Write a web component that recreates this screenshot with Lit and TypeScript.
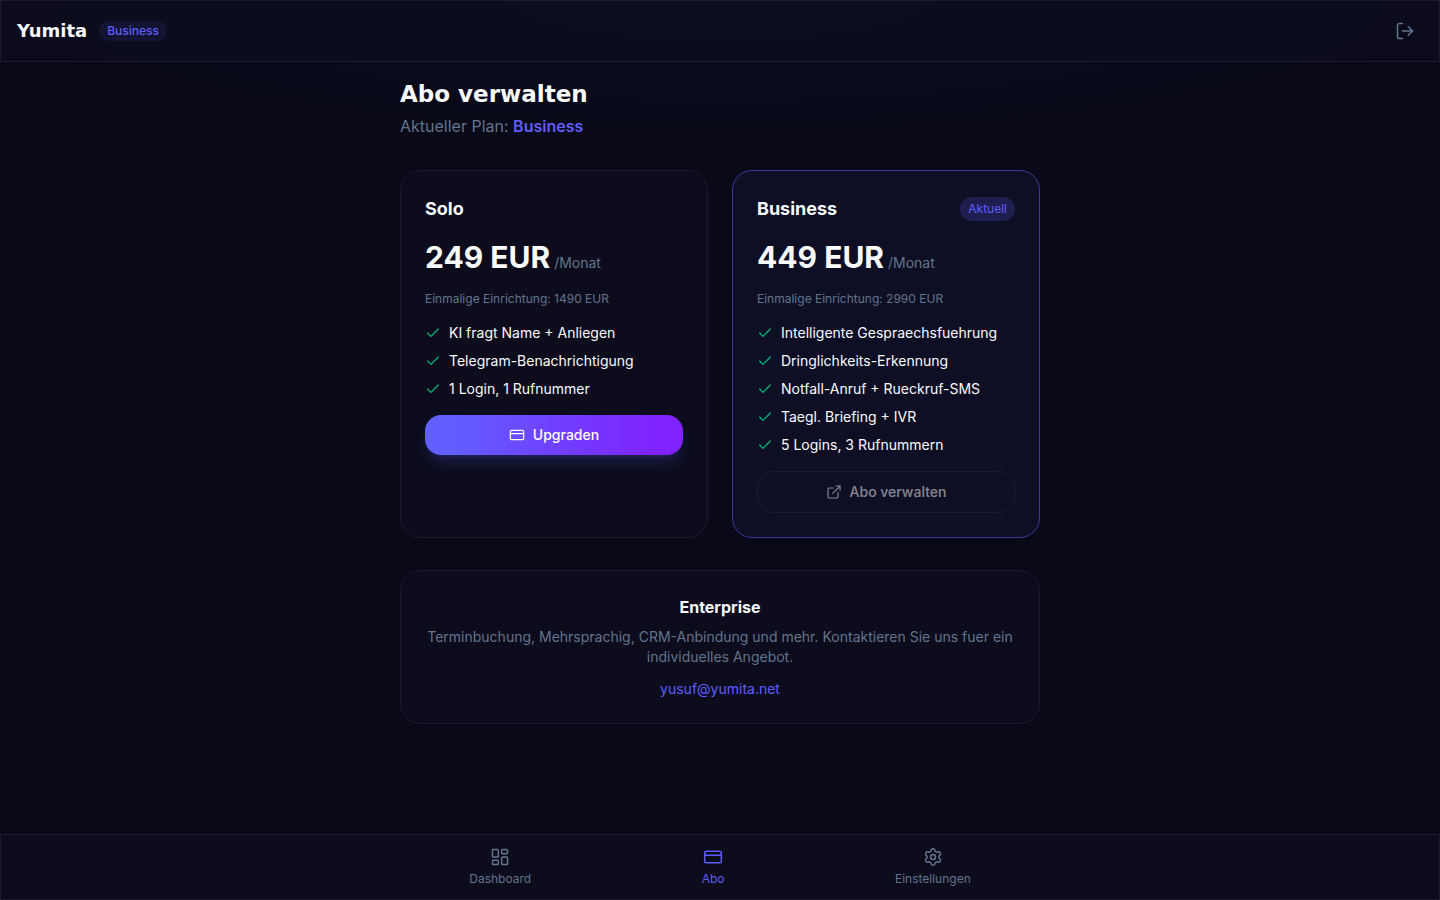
import { LitElement, html, css, svg } from "lit";
import { customElement, property } from "lit/decorators.js";
import { classMap } from "lit/directives/class-map.js";

const ICONS = {
  logout: svg`<path d="m16 17 5-5-5-5"/><path d="M21 12H9"/><path d="M9 21H5a2 2 0 0 1-2-2V5a2 2 0 0 1 2-2h4"/>`,
  check: svg`<path d="M20 6 9 17l-5-5"/>`,
  card: svg`<rect width="20" height="14" x="2" y="5" rx="2"/><path d="M2 10h20"/>`,
  external: svg`<path d="M15 3h6v6"/><path d="M10 14 21 3"/><path d="M18 13v6a2 2 0 0 1-2 2H5a2 2 0 0 1-2-2V8a2 2 0 0 1 2-2h6"/>`,
  dashboard: svg`<rect width="7" height="9" x="3" y="3" rx="1"/><rect width="7" height="5" x="14" y="3" rx="1"/><rect width="7" height="9" x="14" y="12" rx="1"/><rect width="7" height="5" x="3" y="16" rx="1"/>`,
  settings: svg`<path d="M9.671 4.136a2.34 2.34 0 0 1 4.659 0 2.34 2.34 0 0 0 3.319 1.915 2.34 2.34 0 0 1 2.33 4.033 2.34 2.34 0 0 0 0 3.831 2.34 2.34 0 0 1-2.33 4.033 2.34 2.34 0 0 0-3.319 1.915 2.34 2.34 0 0 1-4.659 0 2.34 2.34 0 0 0-3.32-1.915 2.34 2.34 0 0 1-2.33-4.033 2.34 2.34 0 0 0 0-3.831A2.34 2.34 0 0 1 6.35 6.051a2.34 2.34 0 0 0 3.319-1.915"/><circle cx="12" cy="12" r="3"/>`,
};
type IconName = keyof typeof ICONS;

const icon = (name: IconName, size = 20) => html`
  <svg class="icon" width=${size} height=${size} viewBox="0 0 24 24" fill="none"
    stroke="currentColor" stroke-width="1.8" stroke-linecap="round"
    stroke-linejoin="round" aria-hidden="true">${ICONS[name]}</svg>`;

interface Plan {
  name: string;
  price: number;
  setup: number;
  features: string[];
}

const PLANS: Plan[] = [
  {
    name: "Solo",
    price: 249,
    setup: 1490,
    features: ["KI fragt Name + Anliegen", "Telegram-Benachrichtigung", "1 Login, 1 Rufnummer"],
  },
  {
    name: "Business",
    price: 449,
    setup: 2990,
    features: [
      "Intelligente Gespraechsfuehrung",
      "Dringlichkeits-Erkennung",
      "Notfall-Anruf + Rueckruf-SMS",
      "Taegl. Briefing + IVR",
      "5 Logins, 3 Rufnummern",
    ],
  },
];

const NAV: { label: string; icon: IconName; active?: boolean }[] = [
  { label: "Dashboard", icon: "dashboard" },
  { label: "Abo", icon: "card", active: true },
  { label: "Einstellungen", icon: "settings" },
];

const base = css`
  *, *::before, *::after { box-sizing: border-box; }
  h1, h2, p, ul { margin: 0; padding: 0; }
  ul { list-style: none; }
  a { color: inherit; text-decoration: none; }
  button { font: inherit; color: inherit; background: none; border: 0; padding: 0; cursor: pointer; }
  .icon { display: block; flex: none; }
`;

@customElement("plan-card")
export class PlanCard extends LitElement {
  @property({ attribute: false }) plan!: Plan;
  @property({ type: Boolean }) current = false;

  static styles = [
    base,
    css`
      :host { display: grid; }
      .card {
        padding: 24px;
        border: 1px solid var(--line);
        border-radius: 20px;
        background: var(--surface);
      }
      .card.current { border-color: #3b3a9c; background: #0e0f24; }
      .head { display: flex; align-items: center; justify-content: space-between; margin-bottom: 16px; }
      .name { font-size: 18px; line-height: 28px; font-weight: 700; }
      .badge {
        padding: 4px 8px;
        border-radius: 12px;
        background: rgba(97, 95, 255, 0.2);
        color: var(--accent);
        font-size: 12px;
        line-height: 16px;
      }
      .price { font-size: 30px; line-height: 36px; font-weight: 700; margin-bottom: 16px; }
      .per { font-size: 14px; line-height: 20px; font-weight: 400; color: var(--muted); }
      .setup { font-size: 12px; line-height: 16px; color: var(--muted); margin-bottom: 16px; }
      .features { display: grid; gap: 8px; margin-bottom: 16px; font-size: 14px; line-height: 20px; }
      .feature { display: flex; align-items: center; gap: 8px; }
      .feature .icon { color: #00bc7d; }
      .action {
        display: flex;
        align-items: center;
        justify-content: center;
        gap: 8px;
        width: 100%;
        padding: 10px 16px;
        border-radius: 16px;
        font-size: 14px;
        line-height: 20px;
        font-weight: 500;
      }
      .primary {
        background: linear-gradient(90deg, #615fff 10%, #7f22fe 90%);
        box-shadow: 0 10px 15px -3px rgba(97, 95, 255, 0.2), 0 4px 6px -4px rgba(97, 95, 255, 0.2);
        color: #fff;
      }
      .ghost { border: 1px solid #28283c; opacity: 0.5; cursor: default; }
    `,
  ];

  render() {
    const { name, price, setup, features } = this.plan;
    return html`
      <article class=${classMap({ card: true, current: this.current })}>
        <div class="head">
          <h2 class="name">${name}</h2>
          ${this.current ? html`<span class="badge">Aktuell</span>` : ""}
        </div>
        <p class="price">${price} EUR<span class="per"> /Monat</span></p>
        <p class="setup">Einmalige Einrichtung: ${setup} EUR</p>
        <ul class="features">
          ${features.map((f) => html`<li class="feature">${icon("check", 16)}<span>${f}</span></li>`)}
        </ul>
        ${this.current
          ? html`<button class="action ghost" disabled>${icon("external", 16)}Abo verwalten</button>`
          : html`<button class="action primary">${icon("card", 16)}Upgraden</button>`}
      </article>
    `;
  }
}

@customElement("app-root")
export class AppRoot extends LitElement {
  static styles = [
    base,
    css`
      :host {
        --accent: #5f5dfb;
        --muted: #62748e;
        --line: #1b1b2c;
        --surface: #0c0c1d;
        display: flex;
        flex-direction: column;
        min-height: 100vh;
        background:
          radial-gradient(ellipse 50% 140px at 50% 0, rgba(20, 60, 130, 0.1), transparent),
          #090917;
        color: #f8fafc;
        font-family: Inter, "Liberation Sans", sans-serif;
        font-size: 16px;
        line-height: 24px;
      }
      .header {
        display: flex;
        align-items: center;
        justify-content: space-between;
        padding: 12px 16px;
        border: 1px solid var(--line);
        background: rgba(14, 14, 32, 0.6);
      }
      .brand { display: flex; align-items: center; gap: 12px; }
      .logo { font: 700 18px/28px "DejaVu Sans", sans-serif; }
      .tier {
        padding: 2px 8px;
        border-radius: 10px;
        background: rgba(97, 95, 255, 0.1);
        color: var(--accent);
        font-size: 12px;
        line-height: 16px;
        font-weight: 500;
      }
      .logout { padding: 8px; color: var(--muted); }
      .main { flex: 1; width: 100%; max-width: 672px; margin: 0 auto; padding: 16px; }
      .title { font: 700 23px/32px "DejaVu Sans", sans-serif; margin-bottom: 4px; }
      .subtitle { color: var(--muted); margin-bottom: 32px; }
      .plan { color: var(--accent); font-weight: 600; }
      .plans { display: grid; grid-template-columns: repeat(auto-fit, minmax(260px, 1fr)); gap: 24px; margin-bottom: 32px; }
      .enterprise {
        display: grid;
        justify-items: center;
        padding: 24px;
        border: 1px solid var(--line);
        border-radius: 20px;
        background: var(--surface);
        text-align: center;
        font-size: 14px;
        line-height: 20px;
      }
      .offer { font-size: 16px; line-height: 24px; font-weight: 700; margin-bottom: 8px; }
      .text { color: var(--muted); margin-bottom: 12px; }
      .mail { color: var(--accent); }
      .nav { border: 1px solid var(--line); background: var(--surface); }
      .tabs { display: flex; justify-content: space-around; max-width: 672px; margin: 0 auto; }
      .tab {
        display: grid;
        justify-items: center;
        gap: 4px;
        padding: 12px;
        color: var(--muted);
        font-size: 12px;
        line-height: 16px;
      }
      .tab.active { color: var(--accent); }
    `,
  ];

  render() {
    return html`
      <header class="header">
        <div class="brand">
          <span class="logo">Yumita</span>
          <span class="tier">Business</span>
        </div>
        <button class="logout" aria-label="Abmelden">${icon("logout")}</button>
      </header>
      <main class="main">
        <h1 class="title">Abo verwalten</h1>
        <p class="subtitle">Aktueller Plan: <span class="plan">Business</span></p>
        <div class="plans">
          ${PLANS.map((p) => html`<plan-card .plan=${p} ?current=${p.name === "Business"}></plan-card>`)}
        </div>
        <section class="enterprise">
          <h2 class="offer">Enterprise</h2>
          <p class="text">
            Terminbuchung, Mehrsprachig, CRM-Anbindung und mehr. Kontaktieren Sie uns fuer ein individuelles Angebot.
          </p>
          <a class="mail" href="mailto:yusuf@yumita.net">yusuf@yumita.net</a>
        </section>
      </main>
      <nav class="nav">
        <div class="tabs">
          ${NAV.map(
            (n) => html`<a class=${classMap({ tab: true, active: !!n.active })} href="#">${icon(n.icon)}<span>${n.label}</span></a>`
          )}
        </div>
      </nav>
    `;
  }
}
